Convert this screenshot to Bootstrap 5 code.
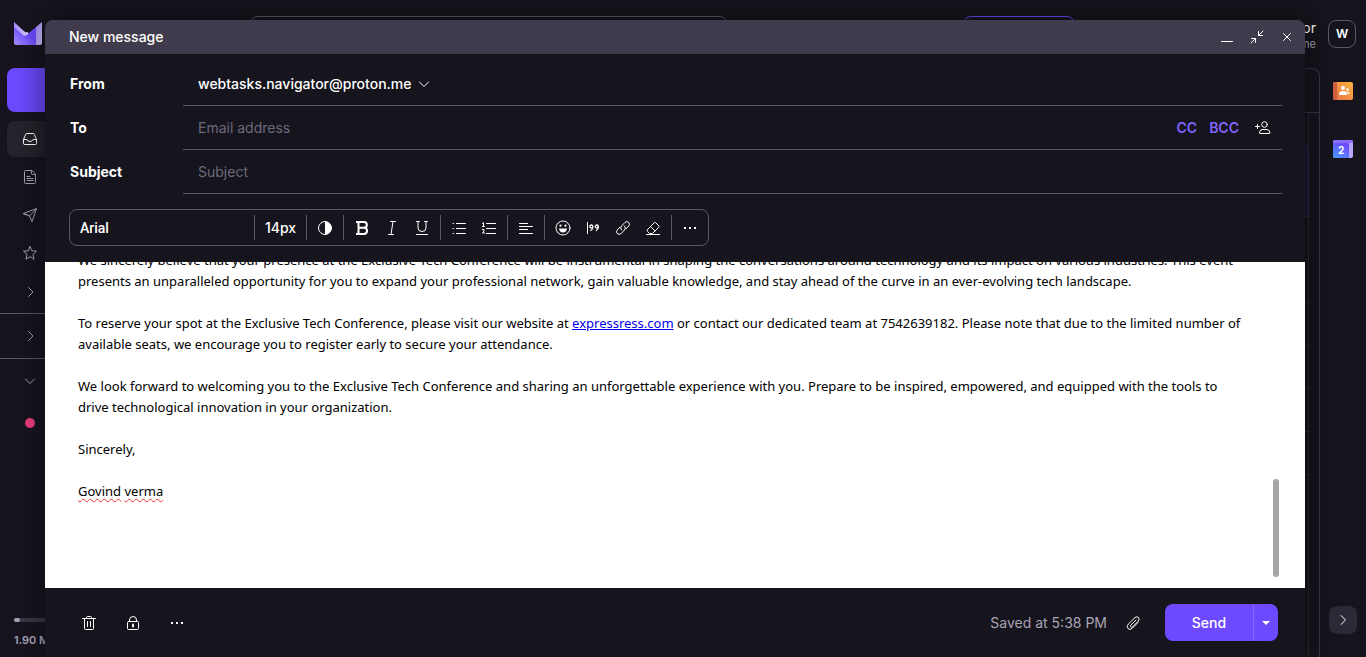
<!DOCTYPE html>
<html lang="en" data-bs-theme="dark">
<head>
<meta charset="utf-8">
<meta name="viewport" content="width=device-width, initial-scale=1">
<title>New message</title>
<link href="https://cdn.jsdelivr.net/npm/bootstrap@5.3.0/dist/css/bootstrap.min.css" rel="stylesheet">
<style>
:root{--bg:#16141c;--line:#5b576b;--soft:#3b3847;--weak:#a7a4b5;--hint:#6d697d;--brand:#6d4aff}
body{font:400 14px/20px Inter,"Liberation Sans",sans-serif;background:var(--bg);color:#fff}
svg{fill:none;stroke:currentColor;stroke-width:1;stroke-linecap:round;stroke-linejoin:round;display:block}
.solid{fill:currentColor;stroke:none}
button{color:inherit}
.app{height:100vh;min-height:480px}
.plain{background:none;border:0;padding:0;display:flex;align-items:center;justify-content:center;flex:none}

.side{width:240px;background:#17141f}
.brandmark{padding:22px 14px 0;height:68px}
.compose-btn{height:44px;margin:0 7px 9px;background:var(--brand);border:0;border-radius:8px}
.side-item{height:36px;margin:0 7px 2px;padding-left:15px;border-radius:8px;color:var(--weak);display:flex;align-items:center}
.side-item.current{background:#26232c;color:#fff}
.side-item.more{height:38px}
.side-group{height:45px;padding-left:22px;border-top:1px solid var(--line);color:var(--weak);display:flex;align-items:center}
.dot{width:10px;height:10px;border-radius:50%;background:#ec3e7c;margin:15px 0 0 25px}
.meter{height:4px;margin:0 14px 10px;border-radius:2px;background:var(--soft)}
.meter div{height:4px;border-radius:2px;background:var(--weak)}
.quota{font-size:11px;font-weight:600;line-height:16px;color:var(--weak);padding:0 14px 9px}

.top-row{height:68px;padding:16px 4px 0 10px}
.find{width:478px;height:36px;background:none;border:1px solid var(--line);border-radius:8px}
.upgrade{width:112px;height:36px;background:none;border:1px solid var(--brand);border-radius:8px}
.who{width:241px;font-size:14px;line-height:16px;padding-top:4px}
.who small{font-size:11px;line-height:16px;color:var(--weak)}
.mailbox{border:1px solid var(--soft);border-bottom:0;border-top-right-radius:8px}
.mail-tools{height:44px;border-bottom:1px solid var(--soft)}
.mail-rows{margin-right:10px;border-right:1px solid #2c2a35}
.mail-rows div{height:43px;flex:none;border-bottom:1px solid #2c2a35}
.mail-rows .first{height:33px}
.mail-rows .picked{height:71px;background:#1c1639}

.rail{width:46px}
.avatar-btn{width:28px;height:28px;margin:20px 2px 0 0;border:1px solid var(--line);border-radius:8px;font-weight:600;font-size:12px}
.rail-next{width:28px;height:28px;border-radius:8px;background:#2d2a37;margin-bottom:23px}
.contacts{margin-top:34px}
.calendar{margin-top:40px}

.composer{position:absolute;top:20px;left:45px;right:61px;bottom:0;background:var(--bg);border-radius:8px 8px 0 0;box-shadow:0 0 32px rgba(0,0,0,.55)}
.titlebar{height:34px;padding:0 3px 0 24px;background:#3f3b4c;border-radius:8px 8px 0 0}
.titlebar h1{font-size:14px;line-height:20px;font-weight:500;margin:0}
.titlebar .plain{width:30px;height:34px}
.fields{padding:8px 23px 15px 25px}
.field-row{height:44px}
.field-row>label,.field-row>.lbl{width:113px;flex:none;font-weight:700}
.field-line{height:44px;border-bottom:1px solid var(--line);padding:0 7px 0 15px}
.field-line input{background:none;border:0;outline:0;padding:0;color:#fff}
.field-line input::placeholder{color:var(--hint);opacity:1}
.from-pick{font-weight:500;gap:5px}
.cc{color:#8064ff;font-weight:600;margin-right:12px}
.tools{height:37px;margin:0 0 16px 24px;border:1px solid var(--line);border-radius:8px;width:max-content}
.tool-group{height:25px;padding:0 3px;border-right:1px solid var(--line)}
.tool-group:last-child{border:0}
.tool-group .plain{width:30px;height:25px}
.tools .pick-font{width:185px;padding-left:10px;justify-content:start;height:25px;border-right:1px solid var(--line);font:500 14px/20px Roboto,"Liberation Sans",sans-serif}
.tools .pick-size{width:52px;height:25px;border-right:1px solid var(--line);font-weight:500}
.paper{position:relative;background:#fff;color:#000;min-height:0;padding:0 33px 86px;font:400 13px/21px "Noto Sans","Open Sans",sans-serif}
.paper p{margin:0 0 21px;white-space:nowrap}
.paper p:last-of-type{margin:0}
.paper a{color:#00e}
.typo{text-decoration:underline wavy #e33 1px;text-underline-offset:2px;text-decoration-skip-ink:none}
.thumb{position:absolute;right:26px;bottom:11px;width:6px;height:98px;border-radius:3px;background:#a6a6a6}
.bottom-bar{height:69px;padding:0 27px 0 30px}
.bottom-bar .tool{width:28px;height:28px;margin-right:16px}
.saved{color:var(--weak)}
.clip{width:28px;height:28px;margin:0 18px 0 12px}
.send{height:37px;background:var(--brand);border-radius:8px}
.send .main-send{width:88px;height:37px;font-weight:500}
.send .more-send{width:25px;height:37px;border-left:1px solid #8467ff}
</style>
</head>
<body>
<div class="app d-flex position-relative overflow-hidden">
  <aside class="side d-flex flex-column flex-shrink-0">
    <a class="brandmark d-block" href="#" aria-label="Mail">
      <svg width="30" height="24" viewBox="0 0 30 24" style="stroke:none">
        <defs><linearGradient id="g1" x1="0" y1="1" x2="1" y2="0"><stop offset="0" stop-color="#a78fff"/><stop offset=".6" stop-color="#6d4aff"/></linearGradient>
        <linearGradient id="g2" x1="0" y1="0" x2="1" y2="1"><stop offset="0" stop-color="#9d86ff"/><stop offset="1" stop-color="#d9ccff"/></linearGradient></defs>
        <path fill="url(#g2)" d="M22 5 28 0v21a2 2 0 0 1-2 2h-4z"/>
        <path fill="url(#g1)" d="M0 4v17a2 2 0 0 0 2 2h20V5l-9 7.500q-2 1.500-4 0z"/>
        <path fill="url(#g2)" d="M0 0l10.500 9.500q1.500 1.200 3 .3l1 2-1.500 1.300q-2 1.300-4 0L0 5z"/>
      </svg>
    </a>
    <button class="compose-btn" aria-label="Compose"></button>
    <a class="side-item current" href="#" aria-label="Inbox"><svg width="16" height="16" viewBox="0 0 16 16"><path d="M1.500 8.500 3.700 3.300Q4 2.500 5 2.500h6q1 0 1.300.8l2.200 5.200v4q0 1-1 1h-11q-1 0-1-1zM1.500 8.500H5q.5 2 3 2t3-2h3.500"/></svg></a>
    <a class="side-item" href="#" aria-label="Drafts"><svg width="16" height="16" viewBox="0 0 16 16"><path d="M9.500 1.500h-6q-1 0-1 1v11q0 1 1 1h9q1 0 1-1v-8zv3q0 1 1 1h3M5 7.500h3M5 9.500h6M5 11.500h6"/></svg></a>
    <a class="side-item" href="#" aria-label="Sent"><svg width="16" height="16" viewBox="0 0 16 16"><path d="M1.500 6.500 14.500 1.500 10 14.500 7.500 9zM14.500 1.500 7.500 9M1.500 6.500 5 8"/></svg></a>
    <a class="side-item" href="#" aria-label="Starred"><svg width="16" height="16" viewBox="0 0 16 16"><path d="M8 1.500l1.900 4.300 4.600.4-3.500 3.200 1.100 4.800L8 11.700l-4.100 2.500L5 9.400 1.500 6.200l4.600-.4z"/></svg></a>
    <a class="side-item more" href="#" aria-label="More"><svg width="16" height="16" viewBox="0 0 16 16"><path d="M6.500 3.500 11 8l-4.500 4.500"/></svg></a>
    <a class="side-group" href="#" aria-label="Views"><svg width="16" height="16" viewBox="0 0 16 16"><path d="M6.500 3.500 11 8l-4.500 4.500"/></svg></a>
    <a class="side-group" href="#" aria-label="Folders"><svg width="16" height="16" viewBox="0 0 16 16"><path d="M3.500 6 8 10.500 12.500 6"/></svg></a>
    <div class="dot"></div>
    <div class="meter mt-auto"><div style="width:3%"></div></div>
    <div class="quota">1.90 MB</div>
  </aside>

  <main class="d-flex flex-column flex-grow-1">
    <div class="top-row d-flex flex-shrink-0">
      <input class="find" type="search" aria-label="Search messages">
      <button class="upgrade ms-auto" aria-label="Upgrade"></button>
      <div class="who text-end">Webtasks Navigator<small class="d-block">webtasks.navigator@proton.me</small></div>
    </div>
    <div class="mailbox flex-grow-1 d-flex flex-column overflow-hidden">
      <div class="mail-tools flex-shrink-0"></div>
      <div class="mail-rows flex-grow-1 d-flex flex-column">
        <div class="first"></div><div class="picked"></div><div></div><div></div><div></div><div></div><div></div><div></div>
      </div>
    </div>
  </main>

  <aside class="rail d-flex flex-column align-items-center flex-shrink-0">
    <button class="plain avatar-btn">W</button>
    <button class="plain contacts" aria-label="Contacts"><svg width="20" height="18" viewBox="0 0 20 18" style="stroke:none">
      <defs><linearGradient id="o" x1="0" y1="1" x2="1" y2="0"><stop stop-color="#e9704a"/><stop offset="1" stop-color="#ffb43d"/></linearGradient></defs>
      <rect width="20" height="18" rx="2" fill="url(#o)"/><path fill="#d0603f" d="M2 0h2v18H2a2 2 0 0 1-2-2V2a2 2 0 0 1 2-2z"/>
      <g fill="#fff"><circle cx="10" cy="6" r="2"/><path d="M6 12q0-3 4-3t4 3q0 1-1 1H7q-1 0-1-1z"/><circle cx="14.500" cy="7.500" r="1.300"/><path d="M13.500 9.500q3-.3 3 2 0 .5-.7.5H15q-.3-1.700-1.500-2.500z"/></g></svg></button>
    <button class="plain calendar" aria-label="Calendar"><svg width="20" height="18" viewBox="0 0 20 18" style="stroke:none">
      <defs><linearGradient id="c" x1="0" y1="1" x2=".6" y2="0"><stop stop-color="#4a9dff"/><stop offset="1" stop-color="#6d4aff"/></linearGradient></defs>
      <rect width="20" height="18" rx="2" fill="#b9a6ff"/><path fill="#8a6dff" d="M2 0h16a2 2 0 0 1 2 2v1H0V2a2 2 0 0 1 2-2z"/><path fill="url(#c)" d="M0 3h15a1 1 0 0 1 1 1v14H2a2 2 0 0 1-2-2z"/>
      <text x="5" y="14" fill="#fff" font-size="10" font-weight="700">2</text></svg></button>
    <button class="plain rail-next mt-auto" aria-label="Show side panel"><svg width="16" height="16" viewBox="0 0 16 16"><path d="M6 3.500 10.500 8 6 12.500"/></svg></button>
  </aside>

  <section class="composer d-flex flex-column" aria-label="Composer">
    <header class="titlebar d-flex align-items-center flex-shrink-0">
      <h1 class="me-auto">New message</h1>
      <button class="plain" aria-label="Minimize"><svg width="16" height="16" viewBox="0 0 16 16"><path d="M2.500 12.500h11"/></svg></button>
      <button class="plain" aria-label="Shrink"><svg width="16" height="16" viewBox="0 0 16 16"><path d="M14 2 9.500 6.500M9.500 2.500v4h4M2 14l4.500-4.500M6.500 13.500v-4h-4"/></svg></button>
      <button class="plain" aria-label="Close"><svg width="16" height="16" viewBox="0 0 16 16"><path d="m4.500 4.500 7 7m0-7-7 7"/></svg></button>
    </header>

    <div class="fields flex-shrink-0">
      <div class="field-row d-flex align-items-center"><span class="lbl">From</span>
        <div class="field-line d-flex align-items-center flex-grow-1"><button class="plain from-pick">webtasks.navigator@proton.me <svg width="16" height="16" viewBox="0 0 16 16"><path d="M3.500 6 8 10.500 12.500 6"/></svg></button></div></div>
      <div class="field-row d-flex align-items-center"><label for="to">To</label>
        <div class="field-line d-flex align-items-center flex-grow-1"><input id="to" class="flex-grow-1" placeholder="Email address">
          <button class="plain cc">CC</button><button class="plain cc">BCC</button>
          <button class="plain px-1" aria-label="Add contacts"><svg width="16" height="16" viewBox="0 0 16 16"><circle cx="9.500" cy="4.500" r="2.800"/><path d="M7 9.500h5q3 .5 3 3.500 0 .5-.5.500H5q-.5 0-.5-.5 0-3 2.500-3.500zM.5 6.500h4M2.500 4.500v4"/></svg></button></div></div>
      <div class="field-row d-flex align-items-center"><label for="subject">Subject</label>
        <div class="field-line d-flex align-items-center flex-grow-1"><input id="subject" class="flex-grow-1" placeholder="Subject"></div></div>
    </div>

    <div class="tools d-flex align-items-center flex-shrink-0" role="toolbar" aria-label="Formatting">
      <button class="plain pick-font">Arial</button>
      <button class="plain pick-size">14px</button>
      <div class="tool-group d-flex"><button class="plain" aria-label="Color"><svg width="16" height="16" viewBox="0 0 16 16"><circle cx="8" cy="8" r="6.500"/><path class="solid" d="M8 1.500a6.500 6.500 0 0 1 0 13z"/></svg></button></div>
      <div class="tool-group d-flex">
        <button class="plain" aria-label="Bold"><svg width="16" height="16" viewBox="0 0 16 16" style="stroke-width:2;stroke-linejoin:miter;stroke-linecap:butt"><path d="M2 2h8a2.800 2.800 0 0 1 0 5.700H5M10 7.700a3 3.100 0 0 1 0 6.300H2M4.500 2v12"/></svg></button>
        <button class="plain" aria-label="Italic"><svg width="16" height="16" viewBox="0 0 16 16"><path d="M6.500 1.500h5M4.500 14.500h5M9 1.500l-2 13"/></svg></button>
        <button class="plain" aria-label="Underline"><svg width="16" height="16" viewBox="0 0 16 16"><path d="M2.500 1.500h3M10.500 1.500h3M4 1.500V8q0 3.500 4 3.500T12 8V1.500M2.500 14.500h11"/></svg></button>
      </div>
      <div class="tool-group d-flex">
        <button class="plain" aria-label="Bulleted list"><svg width="16" height="16" viewBox="0 0 16 16"><path d="M5.500 3.500h9M5.500 8.500h9M5.500 13.500h9M2 3.500h.5M2 8.500h.5M2 13.500h.5"/></svg></button>
        <button class="plain" aria-label="Numbered list"><svg width="16" height="16" viewBox="0 0 16 16"><path d="M5.500 3.500h9M5.500 8.500h9M5.500 13.500h9M1.500 3.500l1-1v4M1.500 6.500h2M1.500 9.500h1.500v1.500l-1.500 2h2"/></svg></button>
      </div>
      <div class="tool-group d-flex"><button class="plain" aria-label="Alignment"><svg width="16" height="16" viewBox="0 0 16 16"><path d="M1.500 3.500h8M1.500 6.500h13M1.500 9.500h8M1.500 13.500h13"/></svg></button></div>
      <div class="tool-group d-flex">
        <button class="plain" aria-label="Emoji"><svg width="16" height="16" viewBox="0 0 16 16"><circle cx="8" cy="8" r="7"/><path class="solid" d="M4 8.500h8q-.5 4-4 4t-4-4z"/><circle class="solid" cx="5.500" cy="5.700" r="1.100"/><circle class="solid" cx="10.500" cy="5.700" r="1.100"/></svg></button>
        <button class="plain" aria-label="Quote"><svg width="16" height="16" viewBox="0 0 16 16"><path d="M2.500 2.500v11"/><g style="stroke-width:1.300"><circle cx="6.300" cy="6.500" r="1.500"/><circle cx="11.800" cy="6.500" r="1.500"/><path d="M7.800 6.500q.2 2.800-2 4M13.300 6.500q.2 2.800-2 4"/></g></svg></button>
        <button class="plain" aria-label="Link"><svg width="16" height="16" viewBox="0 0 16 16"><path d="M6.500 10q-1.900-2 0-4l3.500-3.600q1.900-1.700 3.700 0t0 3.700L11 8.800M9.500 6q1.900 2 0 4L6 13.600q-1.900 1.700-3.700 0t0-3.700L5 7.200"/></svg></button>
        <button class="plain" aria-label="Clear formatting"><svg width="16" height="16" viewBox="0 0 16 16"><path d="M2.500 9.500 9.300 2.700q.7-.7 1.400 0l3.100 3.100q.7.700 0 1.400L7.500 13.500h-3l-2-2q-1-1 0-2zM5.500 6.500l4.500 4.500M1.500 14.500h13"/></svg></button>
      </div>
      <div class="tool-group d-flex"><button class="plain" aria-label="More options"><svg width="16" height="16" viewBox="0 0 16 16"><path class="solid" d="M2 7h2v2H2zM7 7h2v2H7zM12 7h2v2h-2z"/></svg></button></div>
    </div>

    <div class="paper flex-grow-1 d-flex flex-column justify-content-end overflow-hidden">
      <p>We sincerely believe that your presence at the Exclusive Tech Conference will be instrumental in shaping the conversations around technology and its impact on various industries. This event<br>presents an unparalleled opportunity for you to expand your professional network, gain valuable knowledge, and stay ahead of the curve in an ever-evolving tech landscape.</p>
      <p>To reserve your spot at the Exclusive Tech Conference, please visit our website at <a href="#">expressress.com</a> or contact our dedicated team at 7542639182. Please note that due to the limited number of<br>available seats, we encourage you to register early to secure your attendance.</p>
      <p>We look forward to welcoming you to the Exclusive Tech Conference and sharing an unforgettable experience with you. Prepare to be inspired, empowered, and equipped with the tools to<br>drive technological innovation in your organization.</p>
      <p>Sincerely,</p>
      <p><span class="typo">Govind</span> <span class="typo">verma</span></p>
      <div class="thumb"></div>
    </div>

    <footer class="bottom-bar d-flex align-items-center flex-shrink-0">
      <button class="plain tool" aria-label="Delete draft"><svg width="16" height="16" viewBox="0 0 16 16"><path d="M1.500 3.500h13M3.500 3.500v10q0 1 1 1h7q1 0 1-1v-10M5.500 3.500v-1q0-1 1-1h3q1 0 1 1v1M6.500 6.500v5M9.500 6.500v5"/></svg></button>
      <button class="plain tool" aria-label="Encryption"><svg width="16" height="16" viewBox="0 0 16 16"><path d="M3.500 6.500h9q1 0 1 1v6q0 1-1 1h-9q-1 0-1-1v-6q0-1 1-1zM4.500 6.500V5q0-3.500 3.500-3.500T11.500 5v1.500"/><path d="M8 9.500v2" style="stroke-width:2"/></svg></button>
      <button class="plain tool me-auto" aria-label="More actions"><svg width="16" height="16" viewBox="0 0 16 16"><path class="solid" d="M2 7h2v2H2zM7 7h2v2H7zM12 7h2v2h-2z"/></svg></button>
      <span class="saved">Saved at 5:38 PM</span>
      <button class="plain clip" aria-label="Attach file"><svg width="16" height="16" viewBox="0 0 16 16"><path d="M11 5 5.800 10.200q-.8 1 0 1.700t1.700 0L13.400 6q1.500-2 .1-3.500t-3.500 0L3.200 9.300q-2 2.300-.2 4.200t4.200-.1L13 7.500"/></svg></button>
      <div class="send d-flex"><button class="plain main-send">Send</button><button class="plain more-send" aria-label="Schedule send"><svg width="16" height="16" viewBox="0 0 16 16"><path class="solid" d="M4 6h8l-4 4z"/></svg></button></div>
    </footer>
  </section>
</div>
<script src="https://cdn.jsdelivr.net/npm/bootstrap@5.3.0/dist/js/bootstrap.bundle.min.js"></script>
</body>
</html>
